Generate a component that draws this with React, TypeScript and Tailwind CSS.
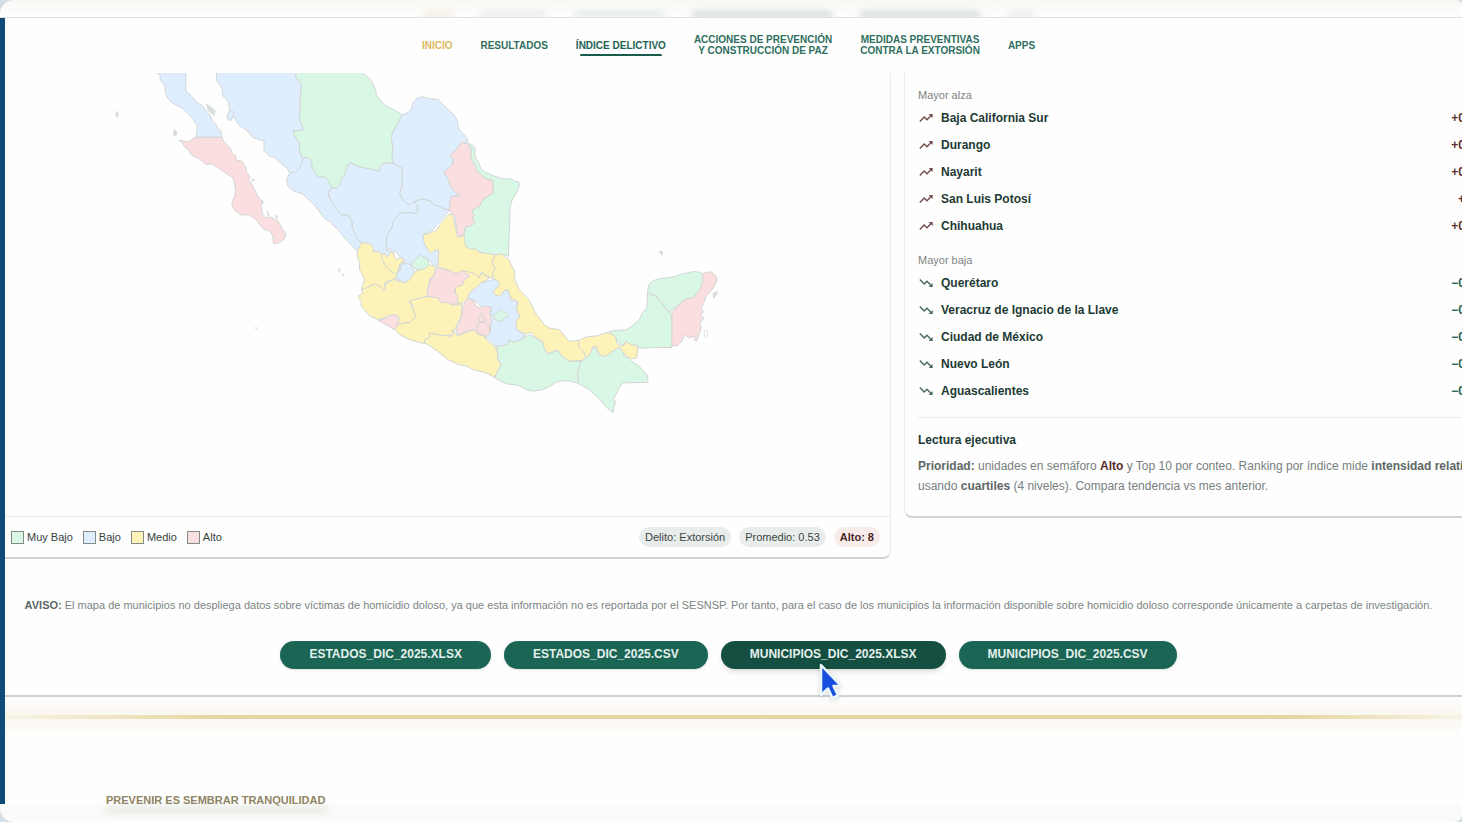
import React from "react";
import { MdTrendingDown, MdTrendingUp } from "react-icons/md";

const LEVELS = {
  muyBajo: "#d8f8e5",
  bajo: "#dfeefe",
  medio: "#fdf3b9",
  alto: "#fadee0",
};

type Level = keyof typeof LEVELS;
type Region = { id: string; level: Level; d: string };

const NORTHWEST: Region[] = [
  { id: "Baja California", level: "bajo", d: "M168 38L180 42 182 62 192 72 195 82 196 98 203 114 218 130 245 143 262 158 275 172 293 197 291 212 289 232 367 232 363 212 353 205 348 192 340 186 330 165 318 152 308 138 290 126 278 112 258 92 258 38Z" },
  { id: "Baja California Sur", level: "alto", d: "M238 241L252 243 268 246 280 236 289 232 367 232 372 245 392 265 397 280 408 288 410 303 420 302 428 306 438 322 440 335 450 350 447 360 458 375 465 390 475 410 487 425 484 440 490 468 500 474 515 472 535 484 548 508 558 520 556 535 545 545 530 552 521 550 520 532 515 520 510 514 492 508 480 495 465 475 445 464 425 466 403 450 397 438 397 425 405 408 407 392 404 365 398 352 383 343 365 330 335 312 320 314 300 298 275 285 265 268 256 263 248 250Z" },
  { id: "Sonora", level: "bajo", d: "M350 30L590 30 588 50 596 62 606 75 602 110 600 180 606 192 612 210 580 214 585 228 600 250 600 275 607 294 612 300 600 325 585 338 570 340 563 325 545 312 535 302 525 292 510 290 493 272 493 242 480 240 470 235 460 234 450 222 440 210 420 198 402 172 390 150 385 125 370 108 367 85 350 60Z" },
  { id: "Isla Tiburón", level: "bajo", d: "M389 152L402 156 400 168 394 182 384 178 382 168Z" },
  { id: "Chihuahua", level: "muyBajo", d: "M590 30L780 30 795 42 815 62 828 90 830 105 845 125 860 138 878 147 908 165 895 190 882 210 875 235 880 260 878 285 882 308 850 310 848 326 840 334 815 328 780 322 765 312 752 308 744 322 740 345 726 360 720 378 712 384 703 384 695 380 685 368 680 353 655 350 637 325 636 305 625 293 607 294 600 275 600 250 585 228 580 214 612 210 606 192 600 180 602 110 606 75 596 62 588 50Z" },
  { id: "Sinaloa", level: "bajo", d: "M570 340L585 338 600 325 612 293 625 293 636 305 637 325 655 350 680 353 695 380 703 384 688 392 687 410 708 438 725 465 745 465 758 485 757 500 765 520 775 530 785 545 782 580 770 572 745 545 715 510 690 485 675 476 640 430 625 418 610 403 580 392 565 378 560 360Z" },
];

const NORTHEAST: Region[] = [
  { id: "Coahuila", level: "bajo", d: "M218 165L235 158 245 148 250 130 262 115 278 110 300 116 325 118 340 135 365 155 375 168 383 182 386 200 390 210 405 225 415 240 412 250 395 248 382 268 365 282 362 290 372 295 370 312 343 338 355 355 362 378 375 395 390 408 365 410 360 435 360 450 345 448 330 440 318 438 300 422 275 418 255 425 240 436 225 428 215 412 208 400 216 390 218 350 217 325 205 318 190 310 187 285 190 260 185 235 188 220 200 200Z" },
  { id: "Durango", level: "bajo", d: "M62 308L75 316 95 322 125 328 150 334 152 322 160 310 190 310 205 318 217 325 218 375 210 400 218 418 240 436 255 425 265 440 265 455 258 462 245 458 212 460 190 485 188 502 172 525 170 550 176 572 190 582 200 600 185 605 160 585 130 575 115 575 110 558 95 545 85 542 75 520 68 500 68 485 55 465 35 465 20 445 5 425 -4 400 4 384 22 385 30 376 35 358 48 340 50 325Z" },
  { id: "Zacatecas", level: "bajo", d: "M265 455L265 440 255 425 275 418 300 422 318 438 330 440 345 448 360 450 345 468 310 510 280 525 285 545 300 565 305 575 330 565 328 620 310 615 300 600 285 590 265 592 245 615 250 640 230 665 205 660 200 640 215 622 225 600 205 585 195 572 190 582 182 565 172 574 170 550 172 525 188 502 190 485 212 460 245 458 258 462Z" },
  { id: "Nuevo León", level: "alto", d: "M395 248L412 250 425 265 425 300 440 320 442 335 455 342 465 355 490 362 492 400 475 408 460 420 450 440 428 450 433 465 430 480 436 490 420 500 408 502 405 525 385 532 380 500 377 470 360 455 362 425 365 410 390 408 375 395 362 378 355 355 343 338 370 312 372 295 362 290 365 282 382 268Z" },
  { id: "Tamaulipas", level: "muyBajo", d: "M415 250L428 255 436 262 437 292 450 312 455 330 478 342 505 352 525 358 545 356 555 364 568 366 570 376 563 395 548 422 542 440 540 510 537 590 520 584 500 592 478 584 460 580 435 570 420 568 408 560 402 528 408 502 420 500 436 490 430 480 433 465 428 450 450 440 460 420 492 400 490 362 465 355 455 342 442 335 440 320 425 300 425 265Z" },
];

const CENTER: Region[] = [
  { id: "San Luis Potosí", level: "medio", d: "M355 -45L370 -48 378 -5 385 22 405 18 408 50 425 58 440 57 450 68 475 72 500 75 490 90 490 105 498 118 488 130 492 145 480 142 468 135 455 128 450 148 435 132 420 130 400 122 390 130 375 132 360 122 345 118 325 112 328 60 315 62 305 72 285 45 280 15 295 12 320 2 335 -20Z" },
  { id: "Nayarit", level: "medio", d: "M92 45L100 38 120 42 130 50 130 65 145 65 155 72 168 75 175 90 182 98 200 105 215 90 225 95 210 108 205 125 200 145 185 150 165 160 168 178 160 182 145 168 125 165 110 178 95 180 105 150 90 120 90 100 82 75 85 62Z" },
  { id: "Jalisco", level: "medio", d: "M100 190L96 178 110 175 135 163 155 172 163 182 170 160 195 148 205 155 225 158 240 150 250 130 270 120 300 105 318 112 320 130 300 150 295 185 295 200 260 208 238 215 245 225 250 240 260 262 245 272 240 280 225 280 205 290 208 262 195 255 170 262 145 270 120 258 95 230 95 215 85 200Z" },
  { id: "Aguascalientes", level: "muyBajo", d: "M245 102L258 88 275 75 283 84 295 88 300 105 285 118 265 120 252 114Z" },
  { id: "Norte de Jalisco", level: "medio", d: "M155 75L165 70 172 82 182 68 192 68 195 82 205 90 210 82 225 90 210 105 205 125 196 132 175 118 160 95Z" },
  { id: "Cañones", level: "bajo", d: "M230 100L245 105 247 116 256 125 240 150 225 158 213 152 201 148 205 128 215 118 212 106Z" },
  { id: "Querétaro", level: "medio", d: "M400 122L435 132 450 145 455 128 480 145 455 160 445 172 430 180 415 205 398 222 388 222 378 200 378 172Z" },
  { id: "Guanajuato", level: "alto", d: "M318 115L330 114 345 120 360 122 375 132 388 130 400 122 420 140 405 150 400 165 378 172 375 188 385 200 385 222 365 225 350 216 335 220 325 205 295 200 292 178 300 165 302 145 312 140Z" },
  { id: "Michoacán", level: "medio", d: "M238 215L260 208 280 203 295 200 325 205 335 220 350 216 365 225 398 225 395 260 380 290 370 315 345 318 325 315 300 310 300 325 285 330 285 342 245 332 210 315 195 298 205 285 225 280 240 280 245 272 260 262 250 240 250 225Z" },
  { id: "Colima", level: "alto", d: "M145 272L165 268 175 258 195 255 208 262 208 275 202 290 192 299 175 288Z" },
  { id: "Guerrero", level: "medio", d: "M300 310L325 315 345 318 365 320 372 312 365 298 385 318 410 308 435 300 445 312 465 320 475 335 495 350 505 368 503 385 515 405 505 425 495 442 465 428 430 420 410 408 390 406 355 390 325 365 295 345 285 340 285 330 300 325Z" },
  { id: "Hidalgo y Puebla", level: "bajo", d: "M480 152L505 148 512 160 505 172 495 190 500 198 515 190 525 182 538 182 545 215 560 210 565 218 560 235 570 262 560 270 562 300 590 318 570 332 550 338 540 330 535 345 500 350 490 338 465 320 482 310 485 232 455 230 440 215 415 205 420 190 435 178 455 160Z" },
  { id: "Estado de México", level: "alto", d: "M415 205L435 215 440 230 455 235 470 228 485 232 480 250 486 262 482 310 470 320 445 312 435 300 410 305 385 318 378 295 388 285 400 245 400 230Z" },
  { id: "Ciudad de México", level: "alto", d: "M457 250L460 262 468 268 466 278 448 276 446 265Z" },
  { id: "Morelos", level: "alto", d: "M442 290L455 278 466 278 480 288 482 310 470 320 445 310Z" },
  { id: "Tlaxcala", level: "muyBajo", d: "M492 255L504 250 512 238 526 246 538 258 525 265 515 276 495 268Z" },
  { id: "Veracruz", level: "medio", d: "M500 75L515 72 530 85 540 90 545 105 556 125 556 150 570 180 600 212 618 250 645 285 660 295 690 300 720 335 748 332 750 350 760 358 772 375 760 392 720 395 700 382 685 362 670 365 655 373 643 355 640 335 620 325 605 308 590 312 572 305 562 300 560 270 572 262 560 235 568 218 545 205 535 180 525 182 510 200 495 195 492 185 505 172 512 160 492 145 488 130 498 118 490 105 490 90Z" },
  { id: "Oaxaca", level: "muyBajo", d: "M500 350L535 345 540 330 550 338 570 332 600 315 620 325 640 340 645 358 655 373 685 362 700 382 720 395 755 395 745 425 748 462 725 455 695 453 675 460 665 468 640 480 610 485 590 480 570 468 530 462 495 445 515 405 505 385 505 368Z" },
];

const SOUTHEAST: Region[] = [
  { id: "Campeche", level: "muyBajo", d: "M325 185L333 195 347 195 360 212 370 220 378 235 395 250 398 268 398 353 297 355 280 350 260 335 248 350 230 325 210 305 235 302 260 300 280 288 300 270 310 248 322 235 324 215Z" },
  { id: "Yucatán", level: "muyBajo", d: "M325 185L328 165 340 154 355 148 400 142 430 132 465 125 482 128 490 134 490 160 480 182 460 205 435 210 412 232 388 248 378 235 370 220 360 212 347 195 333 195Z" },
  { id: "Quintana Roo", level: "alto", d: "M490 132L500 128 515 126 530 138 534 152 520 178 500 200 496 215 484 240 494 245 484 256 495 265 482 280 486 295 478 318 473 334 466 332 465 320 450 324 435 316 428 335 415 348 398 348 398 250 412 232 435 210 460 205 480 182 490 160Z" },
  { id: "Chiapas", level: "muyBajo", d: "M125 395L142 385 150 370 165 350 178 372 190 380 220 365 240 352 250 365 255 378 270 390 300 410 325 438 326 458 250 460 238 478 230 495 222 510 230 516 222 535 222 550 200 532 180 508 150 480 118 462 115 430Z" },
  { id: "Tabasco", level: "medio", d: "M118 332L140 322 175 318 205 308 222 315 230 325 232 340 245 350 255 345 260 334 275 345 295 348 293 385 275 388 262 380 250 365 240 352 220 365 205 376 190 380 178 370 170 350 160 352 155 368 142 385 132 365 118 352Z" },
];

const ISLANDS = [
  "M48 160L54 154 54 172 49 168Z",
  "M224 208L231 218 228 229 221 224Z",
  "M320 132L334 142 346 152 343 166 325 152Z",
  "M486 420L492 428 486 434Z",
  "M503 453L509 466 505 469Z",
  "M528 465L535 473 530 477Z",
  "M457 357L464 360 458 366Z",
  "M716 625L722 630 719 637Z",
  "M729 642L735 647 731 648Z",
  "M1680 575L1690 575 1688 587Z",
  "M1842 700L1856 696 1850 708 1843 716Z",
  "M468 802L472 806 468 808Z",
];

function Regions({ items }: { items: Region[] }) {
  return (
    <>
      {items.map((r) => (
        <path key={r.id} d={r.d} fill={LEVELS[r.level]} />
      ))}
    </>
  );
}

function MexicoMap() {
  return (
    <svg viewBox="5 73 886 444" className="block h-auto w-full" role="img" aria-label="Mapa">
      <g
        transform="translate(100 60) scale(.33333)"
        stroke="#d2d6d4"
        strokeWidth="3"
        strokeLinejoin="round"
      >
        <Regions items={NORTHWEST} />
        <g transform="translate(690 0)">
          <Regions items={NORTHEAST} />
        </g>
        <g transform="translate(690 510)">
          <Regions items={CENTER} />
        </g>
        <g transform="translate(1320 510)">
          <Regions items={SOUTHEAST} />
          <ellipse cx="500" cy="310" rx="5" ry="11" fill="none" strokeWidth="2" />
        </g>
        {ISLANDS.map((d) => (
          <path key={d} d={d} fill="#d7dfdf" strokeWidth="2" />
        ))}
      </g>
    </svg>
  );
}

const RISES = [
  ["Baja California Sur", "+0"],
  ["Durango", "+0"],
  ["Nayarit", "+0"],
  ["San Luis Potosí", "+"],
  ["Chihuahua", "+0"],
];

const FALLS = [
  ["Querétaro", "−0"],
  ["Veracruz de Ignacio de la Llave", "−0"],
  ["Ciudad de México", "−0"],
  ["Nuevo León", "−0"],
  ["Aguascalientes", "−0"],
];

function TrendList({ title, rows, up }: { title: string; rows: string[][]; up?: boolean }) {
  const Icon = up ? MdTrendingUp : MdTrendingDown;
  return (
    <section>
      <h3 className="h-[18px] text-[11px] leading-[18px] text-[#7d8583]">{title}</h3>
      <ul>
        {rows.map(([name, value]) => (
          <li key={name} className="flex h-[27px] items-center gap-[7px] text-xs font-bold text-[#1d3a34]">
            <Icon className={up ? "size-4 text-[#6f4a4a]" : "size-4 text-[#45665f]"} />
            <span className="flex-1">{name}</span>
            <span className={up ? "text-[#5d3030]" : "text-[#1c6152]"}>{value}</span>
          </li>
        ))}
      </ul>
    </section>
  );
}

const NAV = [
  { lines: ["INICIO"], className: "text-[#dcb95f]", glow: "w-8 bg-[#f1ecdd]" },
  { lines: ["RESULTADOS"], className: "text-[#2f6f60]", glow: "w-[69px] bg-[#e6ebea]" },
  { lines: ["ÍNDICE DELICTIVO"], className: "text-[#1f6353]", glow: "w-[93px] bg-[#e2e9e8]", active: true },
  { lines: ["ACCIONES DE PREVENCIÓN", "Y CONSTRUCCIÓN DE PAZ"], className: "text-[#2f6f60]", glow: "w-[143px] bg-[#cfdad8]" },
  { lines: ["MEDIDAS PREVENTIVAS", "CONTRA LA EXTORSIÓN"], className: "text-[#2f6f60]", glow: "w-[123px] bg-[#cfdad8]" },
  { lines: ["APPS"], className: "text-[#2f6f60]", glow: "w-7 bg-[#e6ebea]" },
];

const LEGEND = [
  { label: "Muy Bajo", swatch: "bg-[#d8f8e5]" },
  { label: "Bajo", swatch: "bg-[#dfeefe]" },
  { label: "Medio", swatch: "bg-[#fdf3b9]" },
  { label: "Alto", swatch: "bg-[#fadee0]" },
];

const FILES = [
  { name: "ESTADOS_DIC_2025.XLSX" },
  { name: "ESTADOS_DIC_2025.CSV" },
  { name: "MUNICIPIOS_DIC_2025.XLSX", hovered: true },
  { name: "MUNICIPIOS_DIC_2025.CSV" },
];

function Cursor() {
  return (
    <svg viewBox="0 0 22 38" className="pointer-events-none absolute top-[22px] left-[99px] z-10 h-[38px] w-[22px] overflow-visible drop-shadow-sm" aria-hidden="true">
      <path
        d="M1 2V32L8 25.500L12.500 35L18 32.500L13.500 23H21Z"
        fill="#164fe0"
        stroke="#e9f6fb"
        strokeWidth="2.500"
        strokeLinejoin="round"
      />
    </svg>
  );
}

export default function App() {
  return (
    <div className="overflow-hidden bg-[#d4dee6] font-['Liberation_Sans',Arial,sans-serif]">
      <div className="flex h-[18px] items-end justify-center gap-[25px] overflow-hidden rounded-tl-[14px] rounded-tr-[6px] border-b border-[#dde3e4] bg-linear-to-b from-[#f9f8f5] to-[#fefefe] pr-[5px]" aria-hidden="true">
        {NAV.map((n) => (
          <span key={n.lines[0]} className={`h-[6px] rounded-t-full blur-[3px] ${n.glow}`} />
        ))}
      </div>

      <div className="flex bg-[#fefefe]">
        <div className="w-[5px] shrink-0 bg-[#0f4a78]" />
        <div className="min-w-0 flex-1">
          <nav className="flex h-[55px] items-center justify-center gap-7 pr-[10px] pb-[1px] text-center text-[10px] leading-[11px] font-bold">
            {NAV.map((n) => (
              <a key={n.lines[0]} href="#" className={`relative ${n.className}`}>
                {n.lines.map((line) => (
                  <span key={line} className="block">{line}</span>
                ))}
                {n.active && <span className="absolute inset-x-[4px] -bottom-[5px] h-[2px] rounded-full bg-[#175c4c]" />}
              </a>
            ))}
          </nav>

          <main>
            <div className="grid grid-cols-[886fr_558fr] items-start gap-[13px]">
              <section className="min-w-0 rounded-br-lg border-r border-b-2 border-r-[#ecebe6] border-b-[#cfd4d4]">
                <MexicoMap />
                <div className="flex h-[41px] items-center justify-between border-t border-[#ececec] pr-[10px] pl-[6px]">
                  <ul className="flex gap-[10px] text-[11px] text-[#33413e]">
                    {LEGEND.map((l) => (
                      <li key={l.label} className="flex items-center gap-[3px]">
                        <span className={`size-[13px] border border-[#848c88] ${l.swatch}`} />
                        {l.label}
                      </li>
                    ))}
                  </ul>
                  <div className="flex gap-2 text-[11px] leading-5 text-[#3a4644]">
                    <span className="rounded-full bg-[#e8eceb] px-[6px]">Delito: Extorsión</span>
                    <span className="rounded-full bg-[#e8eceb] px-[6px]">Promedio: 0.53</span>
                    <span className="rounded-full bg-[#f8eceb] px-[6px] font-bold text-[#4a2526]">Alto: 8</span>
                  </div>
                </div>
              </section>

              <aside className="-mr-4 min-w-0 rounded-bl-lg border-b-2 border-l border-b-[#cfd4d4] border-l-[#ecebe6] px-[13px] pt-[13px]">
                <TrendList title="Mayor alza" rows={RISES} up />
                <div className="h-3" />
                <TrendList title="Mayor baja" rows={FALLS} />
                <hr className="mt-[13px] border-[#e9ecec]" />
                <h3 className="mt-[13px] text-xs leading-[18px] font-bold text-[#1d3a34]">Lectura ejecutiva</h3>
                <p className="mt-[7px] mb-5 text-xs leading-5 whitespace-nowrap text-[#77807e]">
                  <b className="text-[#5d6866]">Prioridad:</b> unidades en semáforo <b className="text-[#5a2a2b]">Alto</b> y Top 10 por conteo. Ranking por índice mide{" "}
                  <b className="text-[#5d6866]">intensidad relativa</b>
                  <br />
                  usando <b className="text-[#5d6866]">cuartiles</b> (4 niveles). Compara tendencia vs mes anterior.
                </p>
              </aside>
            </div>

            <p className="mt-9 pr-[10px] text-center text-[11px] leading-5 text-[#7c8583]">
              <b className="text-[#5a6664]">AVISO:</b> El mapa de municipios no despliega datos sobre víctimas de homicidio doloso, ya que esta información no es reportada por el SESNSP. Por tanto, para el caso de los municipios la información disponible sobre homicidio doloso corresponde únicamente a carpetas de investigación.
            </p>

            <div className="mt-[26px] flex justify-center gap-[13px] pr-[10px] pb-[26px]">
              {FILES.map((f) => (
                <div key={f.name} className="relative">
                  <button
                    type="button"
                    className={
                      f.hovered
                        ? "h-7 rounded-full bg-[#144f41] px-[29px] pb-[2px] text-xs font-bold text-[#e4f0ec] shadow-md"
                        : "h-7 rounded-full bg-[#1b6554] px-[29px] pb-[2px] text-xs font-bold text-[#e4f0ec] shadow-sm"
                    }
                  >
                    {f.name}
                  </button>
                  {f.hovered && <Cursor />}
                </div>
              ))}
            </div>
            <hr className="border-t-2 border-[#cdd1d1]" />
          </main>

          <footer>
            <div className="h-[18px] bg-linear-to-b from-[#fefefe] to-[#faf7ee]" />
            <div className="h-[4px] bg-linear-to-r from-[#f8f4e6] via-[#e4d5a0] via-15% to-[#e4d5a0] to-85%">
              <div className="ml-auto h-full w-[12%] bg-linear-to-r from-transparent to-[#f8f4e6]" />
            </div>
            <div className="h-[18px] bg-linear-to-b from-[#faf8f0] to-[#fefefe]" />
            <p className="mt-[57px] ml-[101px] h-[10px] w-fit text-[11px] leading-[12px] font-bold text-[#8d8563]">
              PREVENIR ES SEMBRAR TRANQUILIDAD
            </p>
          </footer>
        </div>
      </div>

      <div className="h-[18px] overflow-hidden rounded-br-[8px] rounded-bl-[14px] bg-[#fbfbfa] pt-[2px] pl-[106px]" aria-hidden="true">
        <div className="h-[8px] w-[222px] bg-[#e9ebe6] blur-[3px]" />
      </div>
    </div>
  );
}
